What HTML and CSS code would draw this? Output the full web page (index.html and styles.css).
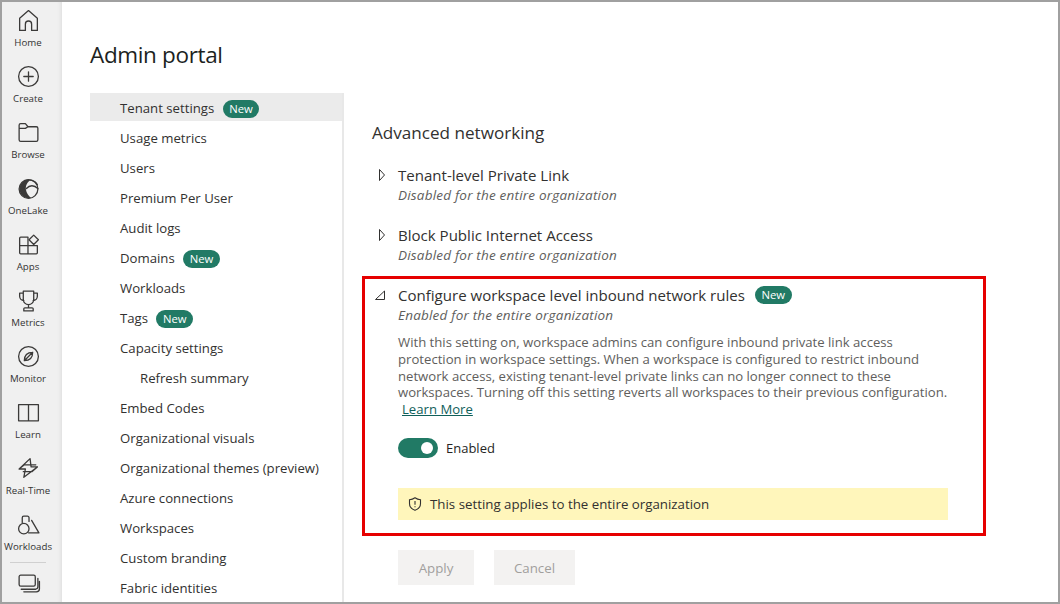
FILE: index.html
```html
<!DOCTYPE html>
<html lang="en">
<head>
<meta charset="utf-8">
<title>Admin portal</title>
<link rel="stylesheet" href="styles.css">
</head>
<body>
<div class="frame">
  <nav class="rail">
    <a class="rail-item"><svg viewBox="0 0 24 24"><path d="M3.500 21.500V9.800L12 2.500l8.500 7.300V21.500H15V15.500A3 3 0 0 0 9 15.500V21.500Z"/></svg><span>Home</span></a>
    <a class="rail-item"><svg viewBox="0 0 24 24"><circle cx="12" cy="12" r="9.500"/><path d="M12 7.500v9M7.500 12h9"/></svg><span>Create</span></a>
    <a class="rail-item"><svg viewBox="0 0 24 24"><path d="M3 19V5a1.500 1.500 0 0 1 1.500-1.500H9L11.500 6.500H19.500A1.500 1.500 0 0 1 21 8V19a1.500 1.500 0 0 1-1.500 1.500H4.500A1.500 1.500 0 0 1 3 19ZM3 8h6l2.500-1.500"/></svg><span>Browse</span></a>
    <a class="rail-item"><svg viewBox="0 0 24 24"><circle cx="12" cy="12.500" r="9"/><path class="solid" d="M3.500 10C5.500 5 10 2.500 14 3.800 11 5.500 9 9 9.500 13 10 16.500 12 19 14.500 21 8 22.500 2 17 3.500 10Z"/><path d="M10 12C13 8.500 17.500 8.500 21 12M14 4c3 .5 5.500 2 6.500 4.500"/></svg><span>OneLake</span></a>
    <a class="rail-item"><svg viewBox="0 0 24 24"><path d="M11.500 5H4.500A1 1 0 0 0 3.500 6V20A1 1 0 0 0 4.500 21H19.500A1 1 0 0 0 20.500 20V13H11.500ZM3.500 13H11.500V21"/><path d="M17 3 21.500 7.500 17 12 12.500 7.500Z"/></svg><span>Apps</span></a>
    <a class="rail-item"><svg viewBox="0 0 24 24"><path d="M7 3H17V11A5 5 0 0 1 7 11ZM7 5H3.500V8A4 4 0 0 0 7.500 12M17 5H20.500V8A4 4 0 0 1 16.500 12M12 16V19M8.500 19H15.500A1 1 0 0 1 16.500 20V22H7.500V20A1 1 0 0 1 8.500 19Z"/></svg><span>Metrics</span></a>
    <a class="rail-item"><svg viewBox="0 0 24 24"><circle cx="12" cy="12" r="9.500"/><path d="M8 16C8 11 11 8 16 8 16 13 13 16 8 16ZM8 16 16 8"/></svg><span>Monitor</span></a>
    <a class="rail-item"><svg viewBox="0 0 24 24"><path d="M2.500 4.500H21.500V20H2.500ZM12 4.500V20"/></svg><span>Learn</span></a>
    <a class="rail-item"><svg viewBox="0 0 24 24"><path d="M13.500 2.500 3 12.500H9L7.500 20.500 20.500 10.500H14.500ZM3 12.500 8 8.500H19M20.500 10.500 15.500 15H7"/></svg><span>Real-Time</span></a>
    <a class="rail-item"><svg viewBox="0 0 24 24"><circle cx="7.500" cy="16" r="5"/><path d="M6 10V5.500A1.500 1.500 0 0 1 7.500 4H11A1.500 1.500 0 0 1 12.500 5.500V9M15 8 22 20H12"/></svg><span>Workloads</span></a>
    <div class="rail-rule"></div>
    <a class="rail-item rail-last"><svg viewBox="0 0 24 24"><path d="M3 5.500A1.500 1.500 0 0 1 4.500 4H17A1.500 1.500 0 0 1 18.500 5.500V13A1.500 1.500 0 0 1 17 14.500H4.500A1.500 1.500 0 0 1 3 13ZM5 17.500H19A2.500 2.500 0 0 0 21 15V7M7.500 20H19.500A3 3 0 0 0 22.500 17V10"/></svg></a>
  </nav>

  <main class="page">
    <h1 class="page-title">Admin portal</h1>
    <div class="columns">
      <ul class="menu">
        <li class="menu-item selected">Tenant settings <span class="badge">New</span></li>
        <li class="menu-item">Usage metrics</li>
        <li class="menu-item">Users</li>
        <li class="menu-item">Premium Per User</li>
        <li class="menu-item">Audit logs</li>
        <li class="menu-item">Domains <span class="badge">New</span></li>
        <li class="menu-item">Workloads</li>
        <li class="menu-item">Tags <span class="badge">New</span></li>
        <li class="menu-item">Capacity settings</li>
        <li class="menu-item sub">Refresh summary</li>
        <li class="menu-item">Embed Codes</li>
        <li class="menu-item">Organizational visuals</li>
        <li class="menu-item">Organizational themes (preview)</li>
        <li class="menu-item">Azure connections</li>
        <li class="menu-item">Workspaces</li>
        <li class="menu-item">Custom branding</li>
        <li class="menu-item">Fabric identities</li>
      </ul>

      <section class="content">
        <h2 class="section-title">Advanced networking</h2>

        <div class="setting">
          <div class="setting-head"><svg class="caret" viewBox="0 0 12 12"><path d="M3.500 .5 8.500 6 3.500 11.500Z"/></svg><span class="setting-name">Tenant-level Private Link</span></div>
          <div class="setting-state">Disabled for the entire organization</div>
        </div>
        <div class="setting">
          <div class="setting-head"><svg class="caret" viewBox="0 0 12 12"><path d="M3.500 .5 8.500 6 3.500 11.500Z"/></svg><span class="setting-name">Block Public Internet Access</span></div>
          <div class="setting-state">Disabled for the entire organization</div>
        </div>

        <div class="highlight">
          <div class="setting-head"><svg class="caret caret-open" viewBox="0 0 12 12"><path d="M10.500 2V10.500H1.500Z"/></svg><span class="setting-name">Configure workspace level inbound network rules</span> <span class="badge badge-head">New</span></div>
          <div class="setting-state">Enabled for the entire organization</div>
          <p class="setting-desc">With this setting on, workspace admins can configure inbound private link access<br>protection in workspace settings. When a workspace is configured to restrict inbound<br>network access, existing tenant-level private links can no longer connect to these<br>workspaces. Turning off this setting reverts all workspaces to their previous configuration.<br><a class="learn" href="#">Learn More</a></p>
          <div class="toggle-row"><span class="toggle"><span class="knob"></span></span><span class="toggle-label">Enabled</span></div>
          <div class="notice"><svg viewBox="0 0 16 16"><path d="M8 1.800C6.300 3 4.600 3.600 2.500 3.700V7.500C2.500 10.700 4.400 13 8 14.300 11.600 13 13.500 10.700 13.500 7.500V3.700C11.400 3.600 9.700 3 8 1.800ZM8 5V8.800M8 10.300V11.300"/></svg><span>This setting applies to the entire organization</span></div>
        </div>

        <div class="actions"><button class="btn btn-apply" disabled>Apply</button><button class="btn btn-cancel" disabled>Cancel</button></div>
      </section>
    </div>
  </main>
</div>
</body>
</html>
```

FILE: styles.css
```css
* { box-sizing: border-box; }
html, body { margin: 0; height: 604px; overflow: hidden; background: #fff; }
body { font-family: "Open Sans", "Noto Sans", "Liberation Sans", sans-serif; color: #252423; }

.frame { width: 1060px; height: 604px; border: 2px solid #a0a0a0; display: flex; overflow: hidden; }

.rail { width: 60px; flex: none; background: #f0f0f0; box-shadow: inset -4px 0 4px -3px #dcdcdc; display: flex; flex-direction: column; align-items: center; padding: 6px 8px 0 0; }
.rail-item { width: 52px; height: 56px; flex: none; display: flex; flex-direction: column; align-items: center; color: #252423; }
.rail-item svg { width: 25px; height: 25px; flex: none; fill: none; stroke: #3b3a39; stroke-width: 1.250; stroke-linejoin: round; stroke-linecap: round; }
.rail-item svg .solid { fill: #3b3a39; stroke: none; }
.rail-item span { font-size: 9.700px; line-height: 12px; margin-top: 4px; white-space: nowrap; color: #333; }
.rail-rule { width: 36px; height: 1px; background: #d0d0d0; flex: none; margin: -6px 0 8px; }
.rail-last { height: 30px; }

.page { flex: 1; min-width: 0; padding: 38px 0 0 28px; }
.page-title { margin: 0; font-size: 22.500px; line-height: 30px; font-weight: 400; letter-spacing: -0.350px; color: #201f1e; }
.columns { display: flex; margin-top: 23px; }

.menu { list-style: none; margin: 0; padding: 0; width: 254px; flex: none; height: 520px; border-right: 2px solid #e8e8e8; overflow: hidden; }
.menu-item { height: 30px; padding-left: 30px; font-size: 13.200px; line-height: 30px; white-space: nowrap; color: #323130; }
.menu-item.selected { height: 28px; margin-bottom: 2px; line-height: 30px; background: #ebebeb; }
.menu-item.sub { padding-left: 50px; }
.badge { display: inline-block; height: 18px; padding: 0 6.500px; margin-left: 5px; border-radius: 9px; background: #217a65; color: #fff; font-size: 11.300px; line-height: 18px; }

.content { flex: 1; min-width: 0; padding: 28px 0 0 18px; }
.section-title { margin: 0 0 0 10px; font-size: 17.100px; line-height: 24px; font-weight: 400; color: #323130; }

.setting { margin: 20px 0 0 10px; height: 40px; }
.setting + .setting { margin-top: 20px; }
.setting-head { display: flex; align-items: center; height: 20px; font-size: 15.050px; line-height: 20px; white-space: nowrap; color: #323130; }
.caret { width: 12px; height: 12px; flex: none; margin: 0 10px 0 4px; fill: none; stroke: #323130; stroke-width: 1; }
.setting-state { margin-left: 26px; font-size: 13.500px; letter-spacing: .2px; line-height: 20px; font-style: italic; color: #605e5c; }

.highlight { width: 624px; height: 260px; margin-top: 11px; border: 3px solid #e60000; padding: 6px 0 0 33px; }
.highlight .setting-head { margin-left: -24px; }
.highlight .caret-open { margin-right: 12px; margin-left: 0; }
.highlight .setting-state { margin-left: 0; }
.badge-head { margin-left: 10px; }
.setting-desc { margin: 9px 0 0; font-size: 13.150px; line-height: 16.800px; color: #605e5c; white-space: nowrap; }
.learn { color: #10605a; margin-left: 4px; }
.toggle-row { display: flex; align-items: center; margin-top: 20px; }
.toggle { width: 40px; height: 20px; border-radius: 10px; background: #217a65; display: flex; align-items: center; justify-content: flex-end; padding-right: 5px; }
.knob { width: 12px; height: 12px; border-radius: 50%; background: #fff; }
.toggle-label { margin-left: 8px; font-size: 13px; color: #252423; }
.notice { width: 550px; height: 32px; margin-top: 30px; background: #fff6bb; display: flex; align-items: center; padding-left: 9px; font-size: 13.300px; color: #323130; }
.notice svg { width: 16px; height: 16px; margin-right: 7px; flex: none; fill: none; stroke: #323130; stroke-width: 1.100; }

.actions { display: flex; gap: 20px; margin: 14px 0 0 36px; }
.btn { height: 35px; border: 0; background: #f3f2f1; color: #a19f9d; font: inherit; font-size: 13.300px; padding: 0; }
.btn-apply { width: 76px; }
.btn-cancel { width: 81px; }
```
